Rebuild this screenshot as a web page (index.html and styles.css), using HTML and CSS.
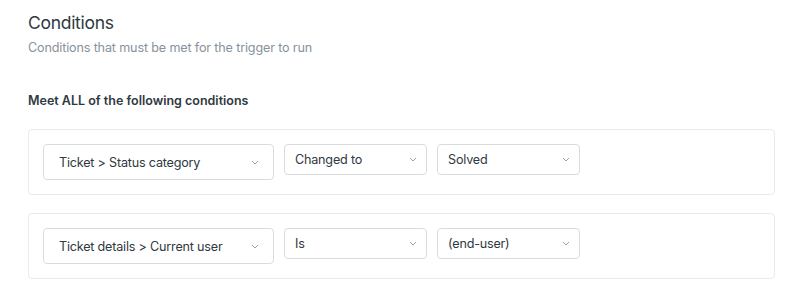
FILE: index.html
```html
<!DOCTYPE html>
<html>
<head>
<meta charset="utf-8">
<link rel="stylesheet" href="styles.css">
</head>
<body>
<div class="page">
  <h1 class="title">Conditions</h1>
  <p class="subtitle">Conditions that must be met for the trigger to run</p>
  <h2 class="group-label">Meet ALL of the following conditions</h2>
  <div class="cards">
    <div class="card">
      <div class="select select-wide"><span>Ticket &gt; Status category</span><svg class="chev" viewBox="0 0 8 5"><path d="M1 1l3 3 3-3"/></svg></div>
      <div class="select select-sm"><span>Changed to</span><svg class="chev" viewBox="0 0 8 5"><path d="M1 1l3 3 3-3"/></svg></div>
      <div class="select select-sm"><span>Solved</span><svg class="chev" viewBox="0 0 8 5"><path d="M1 1l3 3 3-3"/></svg></div>
    </div>
    <div class="card">
      <div class="select select-wide"><span>Ticket details &gt; Current user</span><svg class="chev" viewBox="0 0 8 5"><path d="M1 1l3 3 3-3"/></svg></div>
      <div class="select select-sm"><span>Is</span><svg class="chev" viewBox="0 0 8 5"><path d="M1 1l3 3 3-3"/></svg></div>
      <div class="select select-sm"><span>(end-user)</span><svg class="chev" viewBox="0 0 8 5"><path d="M1 1l3 3 3-3"/></svg></div>
    </div>
  </div>
</div>
</body>
</html>
```
FILE: styles.css
```css
* { box-sizing: border-box; }
html, body { margin: 0; padding: 0; background: #fff; }
body {
  font-family: Inter, "Noto Sans", sans-serif;
  color: #2f3941;
}
.page {
  width: 747px;
  margin-left: 28px;
  padding-top: 11px;
}
.title {
  margin: 0;
  font-size: 17.5px;
  font-weight: 400;
  line-height: 24px;
  letter-spacing: -0.3px;
  color: #2f3941;
}
.subtitle {
  margin: 3px 0 0;
  font-size: 12.6px;
  line-height: 20px;
  letter-spacing: -0.15px;
  color: #87929d;
}
.group-label {
  margin: 34px 0 0;
  font-size: 12.5px;
  font-weight: 600;
  line-height: 18px;
  color: #2f3941;
}
.cards {
  margin-top: 19px;
  display: flex;
  flex-direction: column;
  gap: 18px;
}
.card {
  border: 1px solid #e9ebed;
  border-radius: 4px;
  padding: 14px;
  display: flex;
  align-items: flex-start;
  gap: 10px;
}
.select {
  display: flex;
  align-items: center;
  justify-content: space-between;
  border: 1px solid #d8dcde;
  border-radius: 4px;
  font-size: 12.6px;
  letter-spacing: -0.2px;
  color: #2f3941;
  background: #fff;
}
.select-wide {
  width: 231px;
  height: 36px;
  padding: 0 14px 0 15px;
}
.select-sm {
  width: 143px;
  height: 31px;
  padding: 0 9px 0 10px;
}
.chev {
  width: 8px;
  height: 5px;
  fill: none;
  stroke: #9aa3ab;
  stroke-width: 1;
}
```
